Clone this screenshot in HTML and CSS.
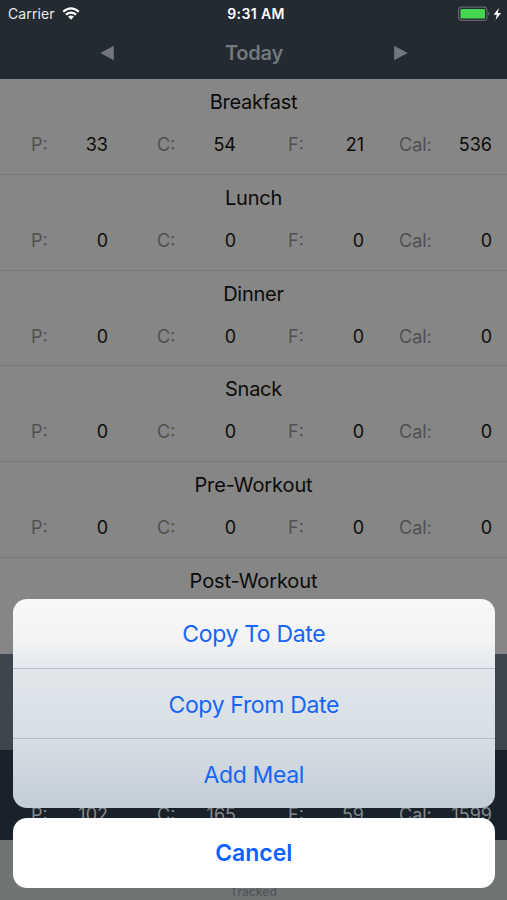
FILE: index.html
```html
<!DOCTYPE html>
<html lang="en">
<head>
  <meta charset="UTF-8">
  <title>Today</title>
  <meta name="viewport" content="width=device-width, initial-scale=1.0">
  <link rel="stylesheet" href="styles.css">
</head>
<body>
  <header>
    <div class="status">
      <div class="carrier">
        <span>Carrier</span>
        <svg width="18" height="13" viewBox="0 0 18 13">
          <path d="M1.2 4.8Q9 -2.1 16.8 4.8M3.9 7.7Q9 3.4 14.1 7.7" fill="none" stroke="#fff" stroke-width="2.2"/>
          <path d="M6 9.6Q9 7.2 12 9.6L9 12.7Z" fill="#fff"/>
        </svg>
      </div>
      <div class="time">9:31 AM</div>
      <svg class="battery" width="44" height="16" viewBox="0 0 44 16">
        <rect x=".6" y="1.1" width="28.3" height="13.3" rx="3.2" fill="none" stroke="#62686c" stroke-width="1.2"/>
        <rect x="2.5" y="3" width="24.5" height="9.5" rx="1.2" fill="#46d752"/>
        <path d="M30.3 5.5Q33.2 7.7 30.3 10Z" fill="#62686c"/>
        <path d="M41 2L35.5 8.7H38.8L37.6 14L43 7.1H39.7Z" fill="#fff"/>
      </svg>
    </div>
    <nav>
      <svg width="14" height="16" viewBox="0 0 14 16"><path d="M.3 8L13.8 .8V15.2Z" fill="#70767a"/></svg>
      <h1>Today</h1>
      <svg width="14" height="16" viewBox="0 0 14 16"><path d="M13.7 8L.2 .8V15.2Z" fill="#70767a"/></svg>
    </nav>
  </header>

  <main>
    <section class="meal">
      <h2>Breakfast</h2>
      <div class="macros">
        <div><span>P:</span><b>33</b></div>
        <div><span>C:</span><b>54</b></div>
        <div><span>F:</span><b>21</b></div>
        <div><span>Cal:</span><b>536</b></div>
      </div>
    </section>
    <section class="meal">
      <h2>Lunch</h2>
      <div class="macros">
        <div><span>P:</span><b>0</b></div>
        <div><span>C:</span><b>0</b></div>
        <div><span>F:</span><b>0</b></div>
        <div><span>Cal:</span><b>0</b></div>
      </div>
    </section>
    <section class="meal">
      <h2>Dinner</h2>
      <div class="macros">
        <div><span>P:</span><b>0</b></div>
        <div><span>C:</span><b>0</b></div>
        <div><span>F:</span><b>0</b></div>
        <div><span>Cal:</span><b>0</b></div>
      </div>
    </section>
    <section class="meal">
      <h2>Snack</h2>
      <div class="macros">
        <div><span>P:</span><b>0</b></div>
        <div><span>C:</span><b>0</b></div>
        <div><span>F:</span><b>0</b></div>
        <div><span>Cal:</span><b>0</b></div>
      </div>
    </section>
    <section class="meal">
      <h2 class="wide">Pre-Workout</h2>
      <div class="macros">
        <div><span>P:</span><b>0</b></div>
        <div><span>C:</span><b>0</b></div>
        <div><span>F:</span><b>0</b></div>
        <div><span>Cal:</span><b>0</b></div>
      </div>
    </section>
    <section class="meal">
      <h2 class="wide">Post-Workout</h2>
    </section>
  </main>

  <div class="goal"></div>
  <div class="totals">
    <div class="macros">
      <div><span>P:</span><b>102</b></div>
      <div><span>C:</span><b>165</b></div>
      <div><span>F:</span><b>59</b></div>
      <div><span>Cal:</span><b>1599</b></div>
    </div>
  </div>
  <footer>Tracked</footer>

  <!-- action sheet -->
  <div class="sheet">
    <div class="actions">
      <button>Copy To Date</button>
      <button>Copy From Date</button>
      <button>Add Meal</button>
    </div>
    <button class="cancel">Cancel</button>
  </div>
</body>
</html>
```
FILE: styles.css
```css
* { box-sizing: border-box; }
body { margin: 0; height: 900px; overflow: hidden; position: relative; display: flex; flex-direction: column; background: #868686; font-family: Inter, "Liberation Sans", sans-serif; }
header { height: 79px; flex: none; background: #232a31; color: #fff; }
.status { height: 27px; display: grid; grid-template-columns: 1fr auto 1fr; align-items: center; padding: 0 5px 0 8px; font-size: 14px; }
.carrier { display: flex; align-items: center; gap: 7px; letter-spacing: 0.1px; color: #e9ebec; }
.time { font-weight: 600; letter-spacing: 0.4px; padding-left: 2px; }
.battery { justify-self: end; }
nav { height: 52px; display: flex; align-items: center; justify-content: space-between; padding: 0 99px 0 100px; }
h1 { margin: 0; font-size: 20px; font-weight: 600; color: #74797d; letter-spacing: -0.2px; }
h2 { margin: 0; padding-top: 10px; font-size: 20px; line-height: 26px; font-weight: 400; text-align: center; color: #0b0b0b; letter-spacing: -0.25px; }
h2.wide { letter-spacing: -0.1px; }
.meal { height: 95.8px; border-bottom: 1px solid #77797b; }
.meal:last-child { border-bottom: none; }
.macros { display: grid; grid-template-columns: 77px 128px 128px 128px; padding: 0 15px 0 31px; margin-top: 18px; font-size: 18px; line-height: 24px; }
.macros div { display: flex; justify-content: space-between; }
.macros div:nth-child(2) { padding-left: 49px; }
.macros div:nth-child(3) { padding-left: 52px; }
.macros div:nth-child(4) { padding-left: 35px; }
.macros span { color: #505050; }
.macros b { color: #0b0b0b; font-weight: 400; }
.goal { height: 96px; flex: none; background: #3f454c; }
.totals { height: 90px; flex: none; background: #19212a; padding-top: 35px; }
.totals span, .totals b { color: #858a8e; }
footer { height: 60px; flex: none; background: #717475; color: #53585a; font-size: 12px; font-weight: 600; line-height: 14px; padding-top: 45px; text-align: center; }

.sheet { position: absolute; left: 13px; right: 12.5px; top: 599px; }
.sheet button { display: block; width: 100%; height: 70px; padding: 0; border: none; background: none; color: #1765f3; font: 400 23px/70px Inter, "Liberation Sans", sans-serif; letter-spacing: -0.35px; }
.actions { height: 209px; overflow: hidden; border-radius: 14px; background: linear-gradient(#f8f8f8, #f2f3f4 20%, #e1e6ea 35%, #d7dfe5 66%, #c3cdd6); }
.actions button:first-child { height: 69px; }
.actions button + button { border-top: 1px solid #b2bfca; padding-top: 2px; line-height: 69px; }
.sheet .cancel { height: 70px; margin-top: 10px; border-radius: 14px; background: #fff; color: #0a61ff; font-weight: 600; letter-spacing: 0; }
```
